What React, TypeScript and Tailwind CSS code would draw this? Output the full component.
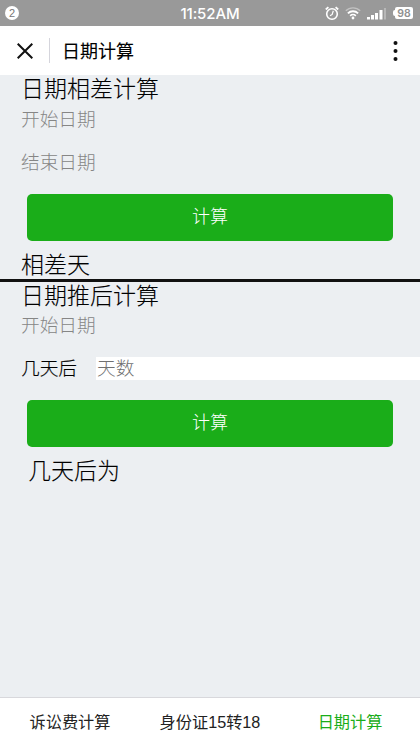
import clsx from "clsx";

const TABS = [
  { label: "诉讼费计算", active: false },
  { label: "身份证15转18", active: false },
  { label: "日期计算", active: true },
];

function StatusBar() {
  return (
    <div className="relative flex h-[26px] flex-none items-center justify-between bg-[#999] pr-[7px] pl-[5px] text-white">
      <span className="flex size-[14px] items-center justify-center rounded-full bg-white font-['Liberation_Sans',sans-serif] text-[11px] leading-none text-[#777]">
        2
      </span>
      <span className="absolute inset-x-0 top-[3px] text-center font-['Inter',sans-serif] text-[15px] leading-[21px] font-medium tracking-[-0.1px]">
        11:52AM
      </span>
      <div className="flex items-center">
        <svg width="14" height="15" viewBox="0 0 14 15" fill="none" stroke="currentColor">
          <circle cx="7" cy="8" r="5.3" strokeWidth="1.6" />
          <path d="M.8 3.5 3.4 1.2M13.2 3.5 10.6 1.2" strokeWidth="1.8" />
          <path d="M8.3 4.8 7.2 8.4 5 9.8" strokeWidth="1.2" />
        </svg>
        <svg className="ml-[6px]" width="16" height="14" viewBox="0 0 16 14" fill="none" stroke="currentColor">
          <path d="M.8 4.8a10.2 10.2 0 0 1 14.4 0" strokeWidth="1.3" opacity=".4" />
          <path d="M2.9 7.3a7.2 7.2 0 0 1 10.2 0" strokeWidth="1.9" />
          <path d="M5.2 9.8a4 4 0 0 1 5.6 0" strokeWidth="1.7" />
          <circle cx="8" cy="12" r="1.4" fill="currentColor" stroke="none" />
        </svg>
        <svg className="ml-[6px]" width="20" height="13" viewBox="0 0 20 13" fill="currentColor">
          <rect x="0" y="10" width="3" height="2.5" />
          <rect x="4" y="8" width="3" height="4.5" />
          <rect x="8" y="6" width="3" height="6.5" />
          <rect x="12.5" y="3" width="3" height="9.5" />
          <rect x="17" y="1" width="2" height="11.5" opacity=".3" />
        </svg>
        <span className="ml-[6px] h-[6px] w-[2px] rounded-l-sm bg-white" />
        <span className="flex h-[12px] w-[18px] items-center justify-center rounded-[2px] bg-white pt-[2px] font-['Inter',sans-serif] text-[10.5px] leading-none font-semibold text-[#909090]">
          98
        </span>
      </div>
    </div>
  );
}

function NavBar() {
  return (
    <header className="flex h-[49px] flex-none items-center bg-white pl-[17px]">
      <svg width="16" height="16" viewBox="0 0 16 16" stroke="#111" strokeWidth="2">
        <path d="M.7.7 15.3 15.3M15.3.7.7 15.3" />
      </svg>
      <span className="ml-[16px] h-[25px] w-px bg-[#d5d5dc]" />
      <h1 className="ml-[12px] pt-[3px] text-[18px] leading-[26px] font-normal text-[#000] [-webkit-text-stroke:0.1px]">
        日期计算
      </h1>
      <svg className="mr-[22px] ml-auto" width="5" height="20" viewBox="0 0 5 20" fill="#111">
        <circle cx="2.5" cy="2.1" r="2" />
        <circle cx="2.5" cy="10" r="2" />
        <circle cx="2.5" cy="17.9" r="2" />
      </svg>
    </header>
  );
}

function CalcButton() {
  return (
    <button className="mx-[27px] block h-[47px] flex-none rounded-[5px] bg-[#1aad19] pb-[2px] text-[18px] leading-[26px] font-light text-white">
      计算
    </button>
  );
}

function DateField({ label }: { label: string }) {
  return <div className="flex-none pl-[21px] text-[18.7px] leading-[26px] font-light text-[#868686]">{label}</div>;
}

function SectionTitle({ children }: { children: string }) {
  return (
    <h2 className="flex-none pl-[21px] text-[23px] leading-[30px] font-light text-[#000] [-webkit-text-stroke:0.1px]">
      {children}
    </h2>
  );
}

function ResultText({ className, children }: { className: string; children: string }) {
  return (
    <p
      className={clsx(
        "mt-[9px] flex-none text-[23px] leading-[30px] font-light text-[#000] [-webkit-text-stroke:0.1px]",
        className,
      )}
    >
      {children}
    </p>
  );
}

export default function App() {
  return (
    <div className="flex h-screen w-full flex-col overflow-hidden bg-[#eceff2] font-['Liberation_Sans','Noto_Sans_CJK_SC',sans-serif]">
      <StatusBar />
      <NavBar />

      <main className="flex min-h-0 flex-1 flex-col">
        <section className="flex h-[204px] flex-none flex-col">
          <div className="-mt-px flex flex-none flex-col">
            <SectionTitle>日期相差计算</SectionTitle>
          </div>
          <div className="mt-[3px] mb-[18px] flex flex-col gap-[17px]">
            <DateField label="开始日期" />
            <DateField label="结束日期" />
          </div>
          <CalcButton />
          <ResultText className="pl-[21px]">相差天</ResultText>
        </section>
        <div className="h-[3px] flex-none bg-[#111]" />

        <section className="flex flex-none flex-col">
          <div className="-mt-px flex flex-none flex-col">
            <SectionTitle>日期推后计算</SectionTitle>
          </div>
          <div className="mt-[2px]">
            <DateField label="开始日期" />
          </div>
          <div className="mt-[18px] mb-[20px] flex h-[23px] items-center text-[18.7px] leading-[23px] font-light">
            <label className="w-[96px] pl-[21px] text-[#000] [-webkit-text-stroke:0.15px]">几天后</label>
            <input
              className="h-[23px] min-w-0 flex-1 bg-white p-0 pl-px placeholder:text-[#707070] focus:outline-none"
              placeholder="天数"
            />
          </div>
          <CalcButton />
          <ResultText className="pl-[28px]">几天后为</ResultText>
        </section>
      </main>

      <nav className="grid h-[50px] flex-none grid-cols-3 border-t border-[#d8d8dc] bg-white">
        {TABS.map((tab) => (
          <a
            key={tab.label}
            className={clsx(
              "flex items-center justify-center pb-px text-[16.2px] leading-[24px]",
              tab.active ? "text-[#1aad19]" : "text-[#222]",
            )}
          >
            {tab.label}
          </a>
        ))}
      </nav>
    </div>
  );
}
